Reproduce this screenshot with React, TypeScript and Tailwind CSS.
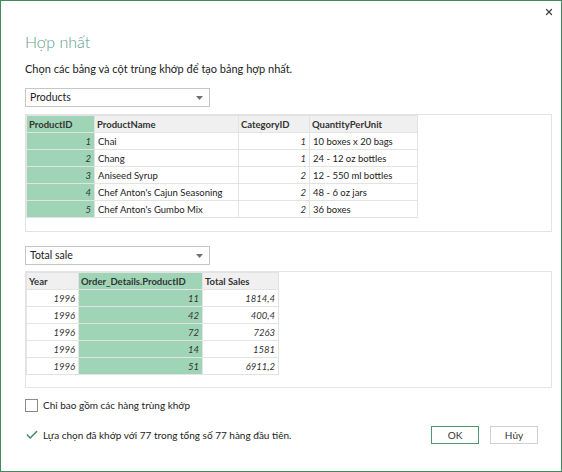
import { Check, X } from 'lucide-react';

const font = { fontFamily: 'Lato, "Noto Sans", sans-serif' };

const products = [
  { id: 1, name: 'Chai', cat: 1, qty: '10 boxes x 20 bags' },
  { id: 2, name: 'Chang', cat: 1, qty: '24 - 12 oz bottles' },
  { id: 3, name: 'Aniseed Syrup', cat: 2, qty: '12 - 550 ml bottles' },
  { id: 4, name: "Chef Anton's Cajun Seasoning", cat: 2, qty: '48 - 6 oz jars' },
  { id: 5, name: "Chef Anton's Gumbo Mix", cat: 2, qty: '36 boxes' }
];

const sales = [
  { year: 1996, pid: 11, total: '1814,4' },
  { year: 1996, pid: 42, total: '400,4' },
  { year: 1996, pid: 72, total: '7263' },
  { year: 1996, pid: 14, total: '1581' },
  { year: 1996, pid: 51, total: '6911,2' }
];

const Dropdown = ({ label }: { label: string }) => (
  <div className="flex h-[19px] w-[185px] items-center justify-between border border-[#c6c6c6] bg-white pl-[4px] pr-[6px] text-[10.5px] text-[#222]">
    <span>{label}</span>
    <svg width="7" height="4" viewBox="0 0 7 4">
      <path d="M0 0h7L3.5 4z" fill="#707070" />
    </svg>
  </div>
);

const th = 'h-[17px] whitespace-nowrap border border-[#e3e3e3] bg-[#f0f0f0] px-[2px] text-left font-bold text-[#333]';
const thKey = 'h-[17px] whitespace-nowrap border border-[#e3e3e3] bg-[#9fd5b6] px-[2px] text-left font-bold text-[#333]';
const td = 'h-[17px] whitespace-nowrap border border-[#e3e3e3] px-[3px] text-[#222]';
const tdNum = 'h-[17px] border border-[#e3e3e3] px-[3px] text-right italic text-[#333]';
const tdKey = 'h-[17px] border border-[#e3e3e3] bg-[#9fd5b6] px-[3px] text-right italic text-[#333]';

export default function App() {
  return (
    <div style={font} className="relative h-[472px] w-[562px] border border-[#3f8a5e] bg-white">
      <button className="absolute right-[7px] top-[6px] text-[#444]">
        <X size={10} strokeWidth={3} />
      </button>
      <div className="pl-[24px] pr-[9px]">
        <h1 className="mt-[29px] text-[16px] font-light leading-[24px] text-[#5f9c8c]">Hợp nhất</h1>
        <p className="mt-[6px] text-[11px] leading-[18px] text-[#222]">
          Chọn các bảng và cột trùng khớp để tạo bảng hợp nhất.
        </p>
        <div className="mt-[10px]">
          <Dropdown label="Products" />
        </div>
        <div className="mt-[7px] h-[118px] border border-[#e3e3e3]">
          <table className="w-[391px] table-fixed border-collapse text-[9.5px] leading-[15px]">
            <thead>
              <tr>
                <th className={`${thKey} w-[68px]`}>ProductID</th>
                <th className={`${th} w-[144px]`}>ProductName</th>
                <th className={`${th} w-[71px]`}>CategoryID</th>
                <th className={`${th} w-[108px]`}>QuantityPerUnit</th>
              </tr>
            </thead>
            <tbody>
              {products.map((p) => (
                <tr key={p.id}>
                  <td className={tdKey}>{p.id}</td>
                  <td className={td}>{p.name}</td>
                  <td className={tdNum}>{p.cat}</td>
                  <td className={td}>{p.qty}</td>
                </tr>
              ))}
            </tbody>
          </table>
        </div>
        <div className="mt-[14px]">
          <Dropdown label="Total sale" />
        </div>
        <div className="mt-[6px] h-[117px] border border-[#e3e3e3]">
          <table className="w-[252px] table-fixed border-collapse text-[9.5px] leading-[15px]">
            <thead>
              <tr>
                <th className={`${th} w-[52px]`}>Year</th>
                <th className={`${thKey} w-[124px]`}>Order_Details.ProductID</th>
                <th className={`${th} w-[76px]`}>Total Sales</th>
              </tr>
            </thead>
            <tbody>
              {sales.map((s, i) => (
                <tr key={i}>
                  <td className={tdNum}>{s.year}</td>
                  <td className={tdKey}>{s.pid}</td>
                  <td className={tdNum}>{s.total}</td>
                </tr>
              ))}
            </tbody>
          </table>
        </div>
        <label className="mt-[10px] flex items-center gap-[5px] text-[10px] leading-[14px] text-[#222]">
          <span className="h-[13px] w-[13px] border border-[#8a8a8a] bg-white" />
          Chỉ bao gồm các hàng trùng khớp
        </label>
        <div className="mt-[14px] flex items-center">
          <Check size={14} strokeWidth={2.5} className="mr-[4px] text-[#3f8a5e]" />
          <span className="text-[10px] leading-[14px] text-[#222]">
            Lựa chọn đã khớp với 77 trong tổng số 77 hàng đầu tiên.
          </span>
          <div className="ml-auto mr-[14px] flex gap-[11px]">
            <button className="h-[18px] w-[48px] border border-[#4a9a6c] bg-white text-[10px] leading-[14px] text-[#333]">
              OK
            </button>
            <button className="h-[18px] w-[48px] border border-[#d0d0d0] bg-white text-[10px] leading-[14px] text-[#333]">
              Hủy
            </button>
          </div>
        </div>
      </div>
    </div>
  );
}
